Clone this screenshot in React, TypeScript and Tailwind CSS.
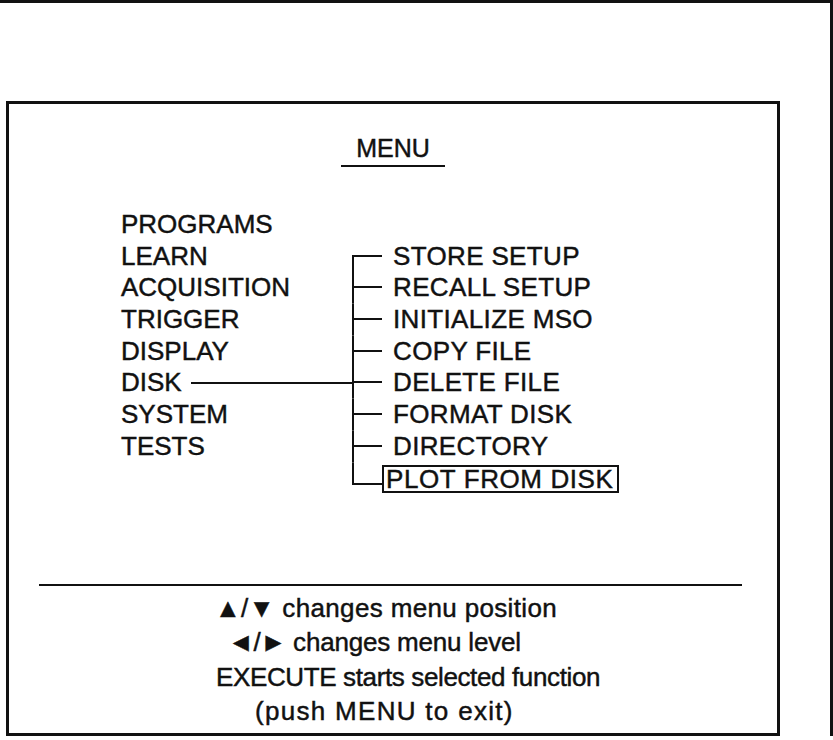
import React from "react";

const ROW = 31.7;
const MID = 15;

function Conn({ kind }: { kind: "first" | "mid" | "last" }) {
  const y1 = kind === "first" ? MID : 0;
  const y2 = kind === "last" ? MID + 6 : ROW;
  const hy = kind === "last" ? MID + 6 : MID;
  return (
    <svg width="30" height={ROW} className="block shrink-0">
      <line x1="1" y1={y1} x2="1" y2={y2} stroke="#111" strokeWidth="2" />
      <line x1="0" y1={hy} x2="30" y2={hy} stroke="#111" strokeWidth="2" />
    </svg>
  );
}

const left = ["PROGRAMS", "LEARN", "ACQUISITION", "TRIGGER", "DISPLAY", "DISK", "SYSTEM", "TESTS"];
const right = [
  "STORE SETUP",
  "RECALL SETUP",
  "INITIALIZE MSO",
  "COPY FILE",
  "DELETE FILE",
  "FORMAT DISK",
  "DIRECTORY",
];

export default function App() {
  return (
    <div
      className="w-[833px] h-[740px] bg-white text-[#111] [-webkit-text-stroke:0.45px_#111]"
      style={{ fontFamily: '"Liberation Sans", Arial, Helvetica, sans-serif' }}
    >
      <div className="w-[833px] h-[736px] border-t-[3px] border-r-[3px] border-[#111] pt-[98px] pl-[6px]">
        <div className="w-[774px] h-[635px] border-[3px] border-[#111] flex flex-col">
          {/* Title */}
          <div className="mt-[29px] flex justify-center">
            <span className="text-[25px] leading-[30px] px-[15px] pb-[2px] border-b-2 border-[#111]">MENU</span>
          </div>

          {/* Menu tree */}
          <div className="mt-[42px] pl-[112px] flex text-[26px] leading-[31.7px]">
            <div className="w-[231px] flex flex-col">
              {left.map((t) =>
                t === "DISK" ? (
                  <div key={t} className="flex items-center h-[31.7px]">
                    <span>{t}</span>
                    <div className="ml-[9px] flex-1 h-[2px] bg-[#111] -mt-[1px]" />
                  </div>
                ) : (
                  <div key={t} className="h-[31.7px]">
                    {t}
                  </div>
                )
              )}
            </div>
            <div className="mt-[31.7px] flex flex-col tracking-[0.35px]">
              {right.map((t, i) => (
                <div key={t} className="flex items-start h-[31.7px]">
                  <Conn kind={i === 0 ? "first" : "mid"} />
                  <span className="ml-[11px]">{t}</span>
                </div>
              ))}
              <div className="flex items-center h-[31.7px]">
                <Conn kind="last" />
                <div className="border-2 border-[#111] h-[28px] flex items-center pl-[2px] pr-[3px] leading-[24px] mt-[1px] tracking-[0.6px]">
                  PLOT FROM DISK
                </div>
              </div>
            </div>
          </div>

          {/* separator */}
          <div className="mt-[90px] ml-[30px] mr-[35px] h-[2px] bg-[#111]" />

          {/* help text */}
          <div className="mt-[5px] flex flex-col items-start text-[26px] leading-[34.3px]">
            <div className="ml-[206px] tracking-[0.35px]">▲/▼ changes menu position</div>
            <div className="ml-[219px] tracking-[-0.2px]">◄/► changes menu level</div>
            <div className="ml-[207px] tracking-[-0.37px]">EXECUTE starts selected function</div>
            <div className="ml-[246px] tracking-[1.3px]">(push MENU to exit)</div>
          </div>
        </div>
      </div>
    </div>
  );
}
